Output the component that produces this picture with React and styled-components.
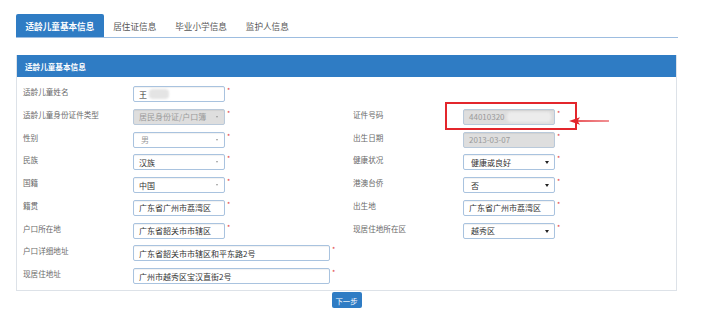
import React from 'react';
import styled, { createGlobalStyle } from 'styled-components';

const GlobalStyle = createGlobalStyle`
body {
  margin: 0;
  background: #ffffff;
  font-family: "Noto Sans CJK SC", "Noto Sans", sans-serif;
}
`

const Page = styled.div`
width: 703px;
height: 326px;
padding: 14px 25px 0 16px;
box-sizing: border-box;
`

const TabBar = styled.div`
display: flex;
height: 23px;
border-bottom: 1px solid #9dbde0;
`

const Tab = styled.div`
display: flex;
align-items: center;
padding: 0 9.5px;
font-size: 8.6px;
color: ${props => props.active ? '#ffffff' : '#555555'};
background: ${props => props.active ? '#2f7cc4' : 'transparent'};
font-weight: ${props => props.active ? 'bold' : 'normal'};
border-radius: 2px 2px 0 0;
`

const Panel = styled.div`
margin-top: 17px;
width: 661px;
border: 1px solid #dde2e8;
border-top: none;
box-sizing: border-box;
`

const PanelHeader = styled.div`
height: 22px;
background: #2f7cc4;
color: #ffffff;
font-size: 7.6px;
font-weight: bold;
display: flex;
align-items: center;
padding-left: 8px;
`

const FormGrid = styled.div`
display: grid;
grid-template-columns: 330px 330px;
row-gap: 6.75px;
padding: 9px 6px 6px 6px;
`

const Field = styled.div`
display: flex;
align-items: flex-start;
height: 16px;
`

const Label = styled.div`
width: 110px;
flex: none;
font-size: 7.6px;
line-height: 12px;
color: #6a6a6a;
`

const Box = styled.div`
position: relative;
width: ${props => props.wide ? '197px' : '92px'};
height: 16px;
box-sizing: border-box;
border: 1px solid ${props => props.disabled ? '#b9c9da' : '#a9c3df'};
background: ${props => props.disabled ? '#dedede' : '#ffffff'};
border-radius: 2px;
box-shadow: inset 0 1px 1px rgba(0, 0, 0, 0.06);
display: flex;
align-items: center;
padding-left: ${props => props.indent ? '7px' : '5px'};
font-size: 8px;
color: ${props => props.muted ? '#9a9a9a' : '#333333'};
white-space: nowrap;
`

const Arrow = styled.span`
position: absolute;
right: ${props => props.dark ? '5px' : '6px'};
top: 6px;
width: 0;
height: 0;
border-left: ${props => props.dark ? '2px' : '1.5px'} solid transparent;
border-right: ${props => props.dark ? '2px' : '1.5px'} solid transparent;
border-top: ${props => props.dark ? '3px' : '2px'} solid ${props => props.dark ? '#222222' : '#9a9a9a'};
`

const Blur = styled.span`
display: inline-block;
width: ${props => props.w}px;
height: 10px;
margin-left: 2px;
border-radius: 4px;
background: ${props => props.tone};
filter: blur(1.2px);
`

const Star = styled.span`
color: #e0393e;
font-size: 7px;
line-height: 8px;
margin-left: 2px;
`

const Highlight = styled.div`
position: absolute;
left: -19px;
top: -8px;
width: 132px;
height: 28px;
border: 2px solid #e3262c;
box-sizing: border-box;
pointer-events: none;
`

const Pointer = styled.svg`
position: absolute;
left: 105px;
top: 6px;
`

const Footer = styled.div`
width: 661px;
display: flex;
justify-content: center;
padding-top: 1px;
`

const NextButton = styled.div`
width: 30px;
height: 16px;
border-radius: 2px;
background: #2f7cc4;
color: #ffffff;
font-size: 7.4px;
display: flex;
align-items: center;
justify-content: center;
`

const left = [
  { label: '适龄儿童姓名', value: '王', blur: 20 },
  { label: '适龄儿童身份证件类型', value: '居民身份证/户口簿', disabled: true, muted: true, select: 'light' },
  { label: '性别', value: '男', muted: true, select: 'light', indent: true },
  { label: '民族', value: '汉族', select: 'light' },
  { label: '国籍', value: '中国', select: 'light' },
  { label: '籍贯', value: '广东省广州市荔湾区' },
  { label: '户口所在地', value: '广东省韶关市市辖区' },
  { label: '户口详细地址', value: '广东省韶关市市辖区和平东路2号', wide: true },
  { label: '现居住地址', value: '广州市越秀区宝汉直街2号', wide: true },
]

const right = [
  null,
  { label: '证件号码', value: '44010320', disabled: true, muted: true, blur: 44, mark: true },
  { label: '出生日期', value: '2013-03-07', disabled: true, muted: true },
  { label: '健康状况', value: '健康或良好', select: 'dark', indent: true },
  { label: '港澳台侨', value: '否', select: 'dark', indent: true },
  { label: '出生地', value: '广东省广州市荔湾区' },
  { label: '现居住地所在区', value: '越秀区', select: 'dark', indent: true },
  null,
  null,
]

const FormField = ({ f }) => {
  if (!f) return <Field />
  return (
    <Field>
      <Label>{f.label}</Label>
      <Box wide={f.wide} disabled={f.disabled} muted={f.muted} indent={f.indent}>
        {f.value}
        {f.blur && <Blur w={f.blur} tone={f.disabled ? '#ececec' : '#e4e4e4'} />}
        {f.select && <Arrow dark={f.select === 'dark'} />}
        {f.mark && <Highlight />}
        {f.mark && (
          <Pointer width="42" height="10" viewBox="0 0 42 10">
            <polygon points="0,5 11,1.2 9,4.2 40,4.6 40,5.4 9,5.8 11,8.8" fill="#e3262c" />
          </Pointer>
        )}
      </Box>
      <Star>*</Star>
    </Field>
  )
}

const App = () => {
  const rows = left.map((l, i) => [l, right[i]])
  return (
    <Page>
      <GlobalStyle />
      <TabBar>
        <Tab active>适龄儿童基本信息</Tab>
        <Tab>居住证信息</Tab>
        <Tab>毕业小学信息</Tab>
        <Tab>监护人信息</Tab>
      </TabBar>
      <Panel>
        <PanelHeader>适龄儿童基本信息</PanelHeader>
        <FormGrid>
          {rows.map(([l, r], i) => (
            <React.Fragment key={i}>
              <FormField f={l} />
              <FormField f={r} />
            </React.Fragment>
          ))}
        </FormGrid>
      </Panel>
      <Footer>
        <NextButton>下一步</NextButton>
      </Footer>
    </Page>
  )
}

export default App
